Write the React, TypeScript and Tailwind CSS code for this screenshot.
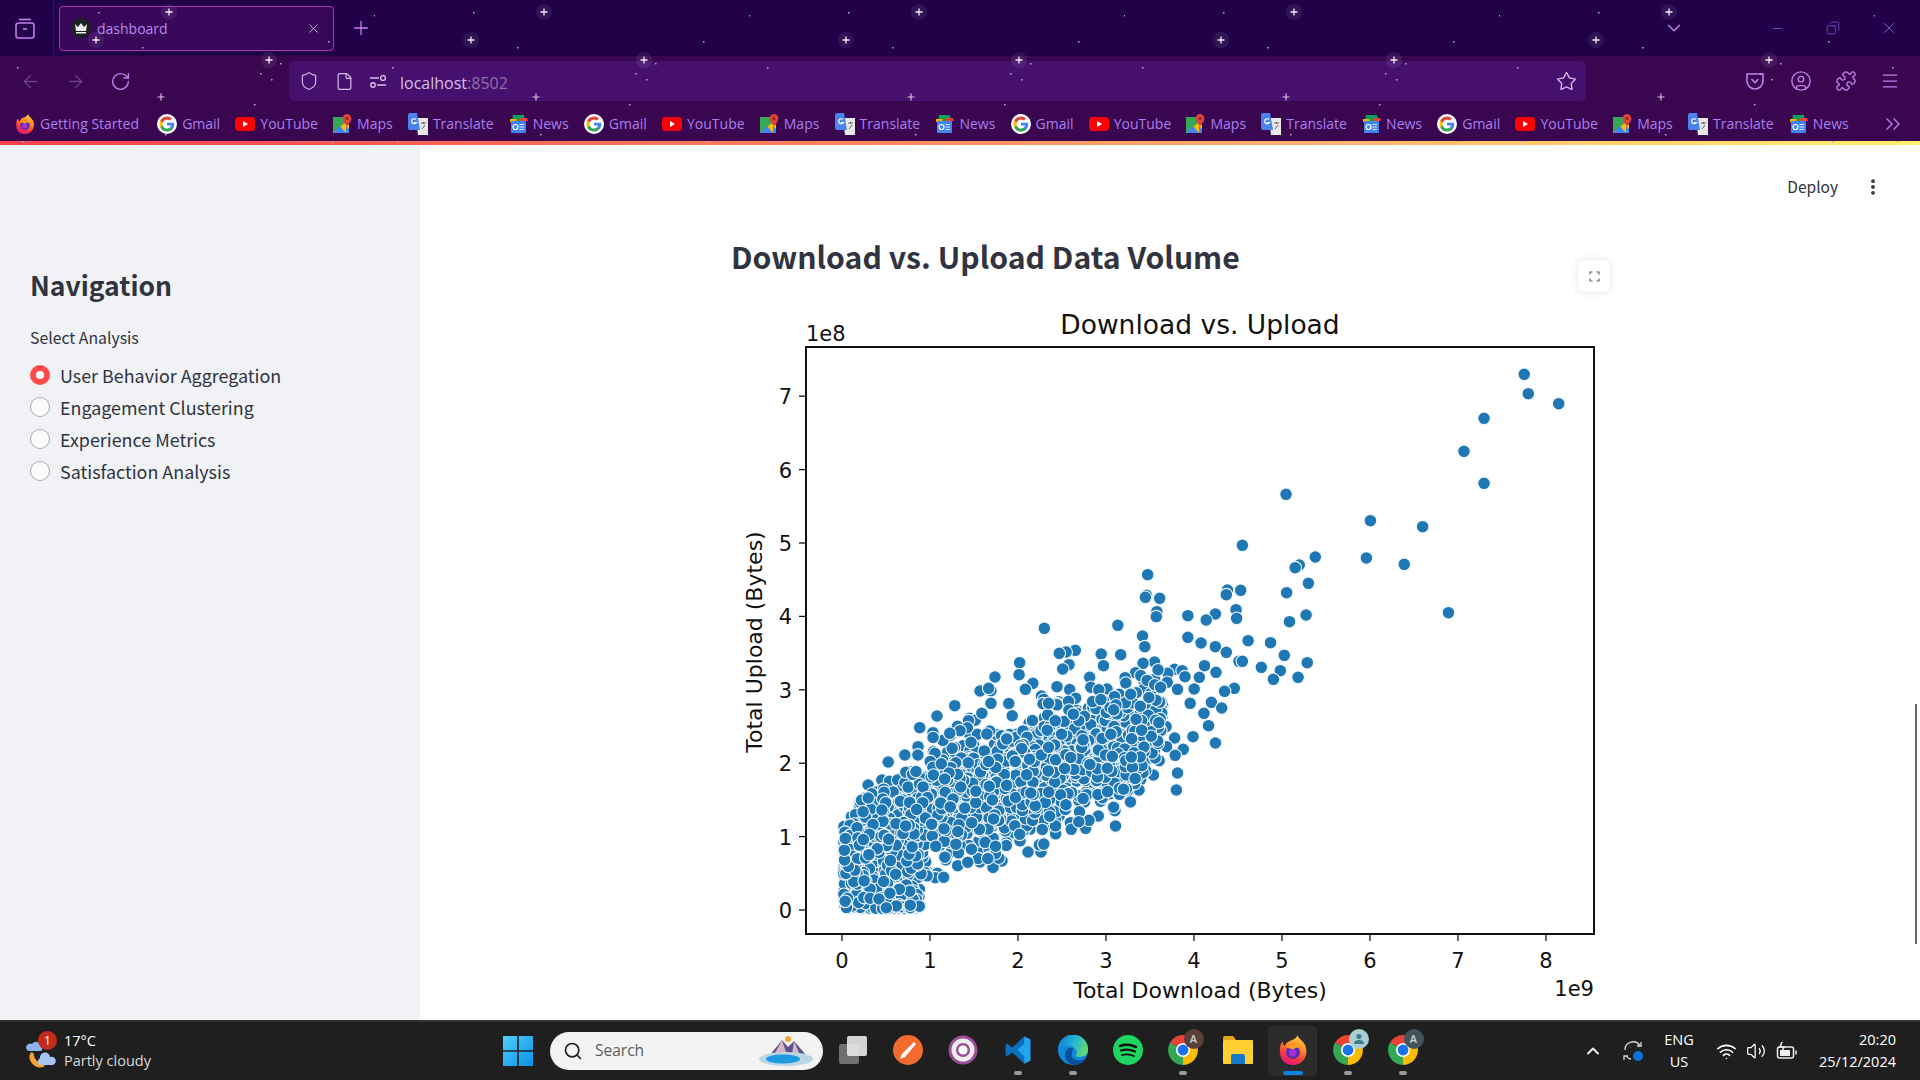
import {
  ArrowLeft, ArrowRight, ChevronDown, ChevronUp, ChevronsRight, CircleUser, Copy, EllipsisVertical, File,
  Menu, Minus, Plus, Puzzle, RotateCw, Search, Shield, Star, Volume2, Wifi, X,
} from 'lucide-react'

// Stars of the browser theme, one tile of the repeating pattern
const bigStars = [[169, 12], [96, 40], [269, 60]]
const smallDots = [[98, 12], [374, 15], [142, 47], [280, 63], [260, 73], [271, 79], [17, 67], [254, 104], [22, 141], [332, 141], [328, 41], [165, 134]]

function Stars() {
  return (
    <svg className="absolute left-0 top-0 pointer-events-none" width="1920" height="145">
      <defs>
        <pattern id="stars" width="375" height="145" patternUnits="userSpaceOnUse">
          {bigStars.map(([x, y]) => (
            <g key={`${x}-${y}`}>
              <circle cx={x} cy={y} r="8" fill="#ffffff" opacity="0.07" />
              <path d={`M${x - 3.5} ${y}H${x + 3.5}M${x} ${y - 3.500}V${y + 3.500}`} stroke="#f4e9f7" strokeWidth="1.3" />
            </g>
          ))}
          <path d="M157.5 97H164.500M161 93.500V100.500" stroke="#d8bfdf" strokeWidth="1.2" />
          {smallDots.map(([x, y]) => (
            <rect key={`${x}-${y}`} x={x} y={y} width="1.5" height="1.5" fill="#bfa5d0" />
          ))}
        </pattern>
      </defs>
      <rect width="1920" height="145" fill="url(#stars)" />
    </svg>
  )
}

function GoogleIcon({ size = 20 }: { size?: number }) {
  return (
    <svg width={size} height={size} viewBox="0 0 32 32" className="shrink-0">
      <circle cx="16" cy="16" r="16" fill="#fff" />
      <g transform="translate(2.8 2.8) scale(1.1)">
        <path fill="#4285F4" d="M22.56 12.25c0-.78-.07-1.53-.2-2.25H12v4.26h5.92c-.26 1.37-1.04 2.53-2.21 3.31v2.77h3.57c2.08-1.92 3.28-4.74 3.28-8.09z" />
        <path fill="#34A853" d="M12 23c2.97 0 5.46-.98 7.28-2.66l-3.57-2.77c-.98.66-2.23 1.06-3.71 1.06-2.86 0-5.29-1.93-6.16-4.53H2.18v2.84C3.99 20.53 7.7 23 12 23z" />
        <path fill="#FBBC05" d="M5.84 14.09c-.22-.66-.35-1.36-.35-2.09s.13-1.43.35-2.09V7.07H2.18C1.43 8.55 1 10.22 1 12s.43 3.45 1.18 4.93l2.85-2.22.81-.62z" />
        <path fill="#EA4335" d="M12 5.38c1.62 0 3.06.56 4.21 1.64l3.15-3.15C17.45 2.09 14.97 1 12 1 7.7 1 3.99 3.47 2.18 7.07l3.66 2.84c.87-2.6 3.3-4.53 6.16-4.53z" />
      </g>
    </svg>
  )
}

function YouTubeIcon() {
  return (
    <svg width="20" height="14" viewBox="0 0 20 14" className="shrink-0">
      <rect width="20" height="14" rx="4" fill="#f00" />
      <path d="M8 4l5 3-5 3z" fill="#fff" />
    </svg>
  )
}

function MapsIcon() {
  return (
    <svg width="19" height="20" viewBox="0 0 19 20" className="shrink-0">
      <path d="M0 3h13v16H0z" fill="#34a853" />
      <path d="M0 19l13-11 3 3v8z" fill="#fbbc04" />
      <path d="M0 19L7 12l6 7z" fill="#4285f4" />
      <path d="M13 19V12l3 3v4z" fill="#4285f4" />
      <path d="M14 0a4.4 4.4 0 0 1 4.4 4.4C18.4 7.6 14 12 14 12S9.6 7.6 9.6 4.4A4.4 4.4 0 0 1 14 0z" fill="#db4437" />
      <circle cx="14" cy="4.4" r="1.5" fill="#8f2a22" />
    </svg>
  )
}

function TranslateIcon() {
  return (
    <svg width="20" height="22" viewBox="0 0 20 22" className="shrink-0">
      <path d="M8 5h12v17H10z" fill="#e8e8e8" />
      <path d="M13 10h5M15.5 9v2M14 16l3-4" stroke="#666" strokeWidth="1" fill="none" />
      <path d="M2 0h7l3 17H2a2 2 0 0 1-2-2V2a2 2 0 0 1 2-2z" fill="#4a82ee" />
      <path d="M8 6.5a2.5 2.5 0 1 0 .4 3H6" stroke="#fff" strokeWidth="1.2" fill="none" />
    </svg>
  )
}

function NewsIcon() {
  return (
    <svg width="19" height="20" viewBox="0 0 19 20" className="shrink-0">
      <path d="M4 1h11l1 6H3z" fill="#0c9d58" />
      <path d="M1 5h7l-1 3H1z" fill="#f9ab00" />
      <path d="M11 4h7l1 3h-8z" fill="#e94235" />
      <rect x="2" y="7" width="15" height="12" rx="1" fill="#4285f4" />
      <path d="M10.5 10.5h4.5M10.5 13h4.5M10.5 15.5h4.5" stroke="#dbe8fc" strokeWidth="1.2" />
      <circle cx="6.5" cy="13" r="2.5" stroke="#fff" strokeWidth="1.2" fill="none" />
    </svg>
  )
}

function FirefoxIcon({ size = 20 }: { size?: number }) {
  return (
    <svg width={size} height={size} viewBox="0 0 32 32" className="shrink-0">
      <defs>
        <linearGradient id="ffbody" x1="0.75" y1="0" x2="0.35" y2="1">
          <stop offset="0" stopColor="#ffd43a" />
          <stop offset="0.4" stopColor="#ff8a2b" />
          <stop offset="0.75" stopColor="#f5343f" />
          <stop offset="1" stopColor="#e31587" />
        </linearGradient>
      </defs>
      <path d="M21 0c0 4 8 7 9 14 2 10-5 18-14 18S1 26 2 15c0-3 1-6 3-8 0 2 1 4 2 5 1-3 3-5 6-6 4-1 7-3 8-6z" fill="url(#ffbody)" />
      <circle cx="16" cy="18" r="7.5" fill="#5b2bb5" />
      <path d="M9 13c3-4 11-4 14 1-3-1-5 0-6 1-3 0-6-1-8-2z" fill="#ff9a1f" />
      <circle cx="15.500" cy="19" r="4" fill="#a52fd6" />
    </svg>
  )
}

function ChromeIcon({ badge, badgeBg, person }: { badge?: string; badgeBg?: string; person?: boolean }) {
  return (
    <div className="relative h-[30px] w-[30px]">
      <svg width="30" height="30" viewBox="0 0 32 32">
        <path d="M16 16L2.2 8A16 16 0 0 1 29.8 8z" fill="#ea4335" />
        <path d="M16 16L29.8 8A16 16 0 0 1 16 32z" fill="#fbbc04" />
        <path d="M16 16L16 32A16 16 0 0 1 2.2 8z" fill="#34a853" />
        <circle cx="16" cy="16" r="7.500" fill="#fff" />
        <circle cx="16" cy="16" r="5.800" fill="#1a73e8" />
      </svg>
      <span className="absolute -right-[6px] -top-[6px] flex h-[20px] w-[20px] items-center justify-center rounded-full text-[11px] font-semibold text-[#cfcfcf]" style={{ backgroundColor: badgeBg }}>
        {person ? (
          <svg width="12" height="12" viewBox="0 0 12 12" fill="#3f7c88"><circle cx="6" cy="3.500" r="2.500" /><path d="M1 11c0-3 2-4 5-4s5 1 5 4z" /></svg>
        ) : badge}
      </span>
    </div>
  )
}

const bookmarkSet = [
  { label: 'Gmail', icon: <GoogleIcon /> },
  { label: 'YouTube', icon: <YouTubeIcon /> },
  { label: 'Maps', icon: <MapsIcon /> },
  { label: 'Translate', icon: <TranslateIcon /> },
  { label: 'News', icon: <NewsIcon /> },
]

const bookmarks = [
  { label: 'Getting Started', icon: <FirefoxIcon /> },
  ...bookmarkSet,
  ...bookmarkSet,
  ...bookmarkSet,
  ...bookmarkSet,
]

function TabBar() {
  return (
    <div className="flex h-14 items-center bg-[#210249] text-[#c77dec]">
      <div className="flex h-full w-[54px] items-center justify-center border-r border-[#3b1560] pr-[4px]">
        <svg width="20" height="21" viewBox="0 0 20 21" fill="none" stroke="currentColor" strokeWidth="1.6">
          <path d="M4 1.5h12" />
          <rect x="1" y="5" width="18" height="15" rx="2.5" />
          <path d="M8 11h4" />
        </svg>
      </div>
      <div className="ml-[5px] flex h-[45px] w-[275px] items-center rounded-[4px] border border-[#a92fb4] bg-[#38075a] pl-[11px] pr-[12px]">
        <div className="flex h-[20px] w-[20px] items-center justify-center rounded-full bg-[#1f1f26]">
          <svg width="14" height="12" viewBox="0 0 14 12"><path d="M1 2l3 3 3-4 3 4 3-3-1 7H2z" fill="#eee" /><rect x="2" y="10" width="10" height="1.5" fill="#eee" /></svg>
        </div>
        <span className="ml-[6px] flex-1 font-['Open_Sans',sans-serif] text-[14px] text-[#b98aee]">dashboard</span>
        <X size={15} strokeWidth={1.4} className="text-[#d7b7ee]" />
      </div>
      <Plus size={22} strokeWidth={1.4} className="ml-[16px]" />
      <ChevronDown size={22} strokeWidth={1.6} className="ml-[1291px]" />
      <Minus size={15} strokeWidth={1.3} className="ml-[85px] text-[#8a54d8]" />
      <Copy size={14} strokeWidth={1.3} className="ml-[41px] scale-x-[-1] text-[#8a54d8]" />
      <X size={18} strokeWidth={1.3} className="ml-[40px] text-[#8a54d8]" />
    </div>
  )
}

function NavBar() {
  return (
    <div className="flex h-[50px] items-center bg-[#39064f] text-[#c77dec]">
      <ArrowLeft size={21} strokeWidth={1.5} className="ml-[20px] text-[#6f3f96]" />
      <ArrowRight size={21} strokeWidth={1.5} className="ml-[24px] text-[#6f3f96]" />
      <RotateCw size={21} strokeWidth={1.6} className="ml-[24px]" />
      <div className="ml-[158px] flex h-10 w-[1297px] items-center rounded-[5px] bg-[#47106f] pl-[10px] pr-[9px] text-[#d9bde9]">
        <Shield size={20} strokeWidth={1.4} />
        <File size={19} strokeWidth={1.5} className="ml-[16px]" />
        <svg width="18" height="14" viewBox="0 0 18 14" fill="none" stroke="currentColor" strokeWidth="1.4" className="ml-[15px]">
          <path d="M1 4h9M8 11h9" />
          <circle cx="14" cy="4" r="2.4" />
          <circle cx="4" cy="11" r="2.2" />
        </svg>
        <span className="ml-[13px] flex-1 pt-[3px] font-['Open_Sans',sans-serif] text-[16px] text-[#d8bfe6]">
          localhost<span className="text-[#8f70a8]">:8502</span>
        </span>
        <Star size={21} strokeWidth={1.5} />
      </div>
      <svg width="20" height="20" viewBox="0 0 20 20" fill="none" stroke="currentColor" strokeWidth="1.6" className="ml-[159px]">
        <path d="M2 3h16v7a8 8 0 0 1-16 0z" />
        <path d="M6.5 8l3.5 3.5L13.5 8" />
      </svg>
      <CircleUser size={22} strokeWidth={1.5} className="ml-[25px]" />
      <Puzzle size={22} strokeWidth={1.5} className="ml-[23px]" />
      <Menu size={20} strokeWidth={1.5} className="ml-[23px]" />
    </div>
  )
}

function BookmarkBar() {
  return (
    <div className="flex h-[35px] items-center overflow-hidden bg-[#39064f] pl-[15px]">
      <div className="flex w-[1866px] items-center gap-[15.2px]">
        {bookmarks.map((b, i) => (
          <div key={i} className={`flex shrink-0 items-center gap-[5px] ${i === 0 ? 'mr-[3px]' : ''}`}>
            {b.icon}
            <span className="font-['Open_Sans',sans-serif] text-[14px] text-[#ab7ff0]">{b.label}</span>
          </div>
        ))}
      </div>
      <ChevronsRight size={24} strokeWidth={1.4} className="shrink-0 text-[#c77dec]" />
    </div>
  )
}

const options = ['User Behavior Aggregation', 'Engagement Clustering', 'Experience Metrics', 'Satisfaction Analysis']

function Sidebar() {
  return (
    <aside className="w-[420px] shrink-0 bg-[#f0f2f6] pl-[30px] pt-[119px] font-['Noto_Sans_CJK_SC',sans-serif] text-[#31333f]">
      <h2 className="text-[26.5px] font-bold leading-[42px]">Navigation</h2>
      <p className="mt-[20px] text-[15.8px] leading-[24px]">Select Analysis</p>
      <div className="mt-[9px] flex flex-col">
        {options.map((o, i) => (
          <div key={o} className="flex h-8 items-center gap-[10px]">
            {i === 0 ? (
              <span className="flex h-5 w-5 items-center justify-center rounded-full bg-[#ff4b4b]">
                <span className="h-2 w-2 rounded-full bg-white" />
              </span>
            ) : (
              <span className="h-5 w-5 rounded-full border border-[#a9a9ad] bg-[#fafafc]" />
            )}
            <span className="text-[17.9px] leading-[26px]">{o}</span>
          </div>
        ))}
      </div>
    </aside>
  )
}

// Scatter chart helpers: page pixels, read off the reference
const px = (v: number) => 842 + 88 * v
const py = (v: number) => 910 - 73.4 * v

const lerp = (pts: number[][], x: number) => {
  for (let i = 1; i < pts.length; i++) {
    if (x <= pts[i][0]) {
      const [x0, y0] = pts[i - 1]
      const [x1, y1] = pts[i]
      return y0 + ((x - x0) / (x1 - x0)) * (y1 - y0)
    }
  }
  return pts[pts.length - 1][1]
}

const upper = [[0, 1.1], [0.1, 1.4], [0.3, 1.8], [0.5, 2.05], [1, 2.45], [1.5, 2.8], [2, 3], [2.5, 3.2], [3, 3.3], [3.5, 3.4], [3.7, 3.3]]
const lower = [[0, 0.02], [0.9, 0.02], [1, 0.28], [1.85, 0.45], [2.2, 0.6], [2.45, 0.8], [2.8, 1.05], [3.1, 1.15], [3.55, 1.75], [3.7, 2]]

function buildCloud() {
  let seed = 20241225
  const rnd = () => {
    seed = (seed * 1664525 + 1013904223) % 4294967296
    return seed / 4294967296
  }
  const out: number[][] = []
  // dense block in the lower left corner
  for (let i = 0; i < 420; i++) {
    out.push([px(0.02 + 0.86 * rnd()), py(0.02 + 1.1 * rnd() * rnd())])
  }
  for (let i = 0; i < 1900; i++) {
    const x = 0.02 + 3.62 * Math.pow(rnd(), 1.35)
    const lo = lerp(lower, x)
    const hi = lerp(upper, x)
    // soft falloff towards both edges, so the outline breaks up
    const t = (rnd() + rnd() + rnd() * 0.5) / 2.5
    out.push([px(x), py(lo + (hi - lo) * t)])
  }
  for (let i = out.length - 1; i > 0; i--) {
    const j = Math.floor(rnd() * (i + 1))
    const tmp = out[i]
    out[i] = out[j]
    out[j] = tmp
  }
  return out
}

// stragglers, traced from the two crops of the chart
const upperPts = [[1401, 463], [1408, 521], [1461, 551], [1331, 595], [1296, 694], [1331, 790], [986, 823], [1133, 902], [1224, 920], [910, 976], [1037, 1011], [1126, 1014], [1192, 1033], [1009, 1035], [1002, 1043], [745, 1064], [1025, 1090], [884, 1110], [907, 1111], [882, 1124], [743, 1126], [741, 1132], [766, 1135], [987, 1118], [761, 1175], [899, 1169], [815, 1187], [863, 1182], [1021, 1185], [760, 1190], [847, 1200], [1269, 1178], [992, 1205], [900, 1195]]
const lowerPts = [[565, 25], [693, 16], [736, 48], [815, 52], [838, 69], [920, 62], [959, 68], [863, 80], [740, 80], [882, 97], [983, 106], [1023, 128], [904, 124], [910, 124], [757, 126], [698, 104], [664, 102], [619, 91], [603, 96], [591, 100], [737, 130], [608, 134], [597, 147], [668, 137], [522, 128], [943, 142], [976, 152], [844, 137], [864, 157], [724, 158], [521, 164], [479, 171], [964, 178], [1007, 172], [835, 172], [792, 148], [805, 152], [780, 160], [810, 170], [545, 190], [779, 187], [739, 186], [757, 178], [453, 213], [472, 212], [896, 205], [879, 214], [797, 208], [826, 207], [532, 208], [560, 230], [856, 247], [819, 250], [874, 264], [771, 256], [409, 257], [378, 288], [843, 280], [770, 290], [851, 317], [348, 323], [777, 320], [863, 369], [824, 350], [792, 354], [807, 388], [778, 380], [793, 406], [765, 422], [797, 459], [755, 465], [733, 478], [795, 510], [730, 510], [710, 512], [715, 546], [688, 572], [659, 588], [689, 618], [637, 625], [293, 426], [243, 555], [258, 495], [229, 590], [282, 480], [322, 405], [345, 380], [371, 338], [402, 345], [435, 295], [468, 205], [472, 250], [560, 228], [587, 200], [645, 170]]

const points = [
  ...upperPts.map(([x, y]) => [720 + x / 1.742, 220 + y / 3]),
  ...lowerPts.map(([x, y]) => [720 + x / 1.742, 620 + y / 3]),
  ...buildCloud(),
]

function Chart() {
  const xTicks = [0, 1, 2, 3, 4, 5, 6, 7, 8]
  const yTicks = [0, 1, 2, 3, 4, 5, 6, 7]
  return (
    <svg width="870" height="735" viewBox="740 285 870 735" className="font-['DejaVu_Sans',sans-serif]">
      <text x="1200" y="334" textAnchor="middle" fontSize="26.5" fill="#111">Download vs. Upload</text>
      <text x="806" y="341" fontSize="21" fill="#111">1e8</text>
      <text x="1594" y="996" textAnchor="end" fontSize="21" fill="#111">1e9</text>
      <text x="1200" y="998" textAnchor="middle" fontSize="22" fill="#111">Total Download (Bytes)</text>
      <text transform="translate(762 642) rotate(-90)" textAnchor="middle" fontSize="22" fill="#111">Total Upload (Bytes)</text>
      {points.map(([x, y], i) => (
        <circle key={i} cx={x} cy={y} r="6.3" fill="#1f77b4" stroke="#f2f8fc" strokeWidth="1.1" />
      ))}
      <rect x="806" y="347" width="788" height="587" fill="none" stroke="#111" strokeWidth="2" />
      {xTicks.map((t) => (
        <g key={t}>
          <path d={`M${px(t)} 934V941`} stroke="#111" strokeWidth="1.3" />
          <text x={px(t)} y="968" textAnchor="middle" fontSize="21" fill="#111">{t}</text>
        </g>
      ))}
      {yTicks.map((t) => (
        <g key={t}>
          <path d={`M799 ${py(t)}H806`} stroke="#111" strokeWidth="1.3" />
          <text x="792" y={py(t) + 8} textAnchor="end" fontSize="21" fill="#111">{t}</text>
        </g>
      ))}
    </svg>
  )
}

function MainPanel() {
  return (
    <main className="relative flex-1 overflow-hidden bg-white font-['Noto_Sans_CJK_SC',sans-serif] text-[#31333f]">
      <div className="flex h-[84px] items-center justify-end pr-[37px]">
        <span className="text-[15.5px]">Deploy</span>
        <EllipsisVertical size={20} strokeWidth={2.6} className="ml-[25px]" />
      </div>
      <div className="relative ml-[311px] w-[880px]">
        <h1 className="text-[30.2px] font-bold leading-[54px]">Download vs. Upload Data Volume</h1>
        <div className="mt-[2px] ml-[9px]">
          <Chart />
        </div>
        <button className="absolute left-[847px] top-[31px] flex h-8 w-8 items-center justify-center rounded-[6px] bg-white shadow-[0_0_8px_rgba(0,0,0,0.12)]">
          <svg width="11" height="11" viewBox="0 0 11 11" fill="none" stroke="#666" strokeWidth="1.2">
            <path d="M1 3.5V1h2.5M7.5 1H10v2.5M10 7.5V10H7.5M3.5 10H1V7.5" />
          </svg>
        </button>
      </div>
      <div className="absolute right-[3px] top-[559px] h-[240px] w-[2px] bg-[#6a6a6a]" />
    </main>
  )
}

function TaskSlot({ children, dot, active }: { children: React.ReactNode; dot?: boolean; active?: boolean }) {
  return (
    <div className="relative flex h-[50px] w-[55px] items-center justify-center">
      {active && <div className="absolute inset-y-0 left-[3px] right-[3px] rounded-[4px] border border-[#2e2e2e] bg-[#2b2b2b]" />}
      <div className="relative -mt-[2px]">{children}</div>
      {dot && <span className="absolute bottom-[1px] left-[24px] h-[4px] w-[8px] rounded-full bg-[#9a9a9a]" />}
      {active && <span className="absolute bottom-[1px] left-[18px] h-[4px] w-[20px] rounded-full bg-[#0a84e0]" />}
    </div>
  )
}

function Taskbar() {
  return (
    <footer className="flex h-[60px] items-center border-t-[2px] border-[#333] bg-[#1f1f1f] font-['Open_Sans',sans-serif] text-white">
      <div className="flex w-[503px] shrink-0 items-center pl-[24px]">
        <div className="relative h-[40px] w-[40px]">
          <svg width="34" height="40" viewBox="0 0 34 40">
            <path d="M3 19a4 4 0 0 1 5-6 5 5 0 0 1 9 2 3 3 0 0 1 0 5H5a3 3 0 0 1-2-1z" fill="#8fb3ee" />
            <path d="M8 22a9 9 0 0 0 12 12 12 12 0 0 1-12-12z" fill="#f3a233" stroke="#f3a233" strokeWidth="3" />
            <path d="M16 34a4 4 0 0 1 0-7 5 5 0 0 1 10-1 4 4 0 0 1 3 8z" fill="#a8c5f3" />
          </svg>
          <span className="absolute left-[14px] top-0 flex h-[19px] w-[19px] items-center justify-center rounded-full bg-[#c42b1c] text-[12px]">1</span>
        </div>
        <div className="flex flex-col">
          <span className="text-[14.5px] leading-[20px]">17°C</span>
          <span className="text-[14.5px] leading-[20px] text-[#d8d8d8]">Partly cloudy</span>
        </div>
      </div>
      <svg width="30" height="30" viewBox="0 0 30 30" className="shrink-0">
        <defs>
          <linearGradient id="win" x1="0" y1="0" x2="1" y2="1">
            <stop offset="0" stopColor="#4fd0f8" />
            <stop offset="1" stopColor="#0a8fe8" />
          </linearGradient>
        </defs>
        <path d="M0 0h14.2v14.2H0zM15.8 0H30v14.2H15.8zM0 15.8h14.2V30H0zM15.8 15.8H30V30H15.8z" fill="url(#win)" />
      </svg>
      <div className="ml-[17px] flex h-[38px] w-[273px] shrink-0 items-center rounded-full bg-[#f3f3f3] pl-[13px] pr-[7px]">
        <Search size={20} strokeWidth={2} className="text-[#222]" />
        <span className="ml-[12px] flex-1 text-[15.5px] text-[#5c5c5c]">Search</span>
        <svg width="58" height="32" viewBox="0 0 58 32">
          <path d="M12 20L24 5l6 7 6-6 12 14z" fill="#5b5290" />
          <path d="M24 5l5 15H16zM36 6l6 14h-8z" fill="#d6b7c9" />
          <circle cx="30" cy="4" r="3" fill="#f5a623" />
          <ellipse cx="28" cy="24" rx="27" ry="7" fill="#bcd6e6" />
          <ellipse cx="25" cy="24" rx="17" ry="4.5" fill="#1e9be0" />
        </svg>
      </div>
      <div className="ml-[2px] flex shrink-0 items-center">
        <TaskSlot>
          <div className="relative h-[28px] w-[28px]">
            <div className="absolute bottom-0 left-0 h-[20px] w-[20px] rounded-[2px] bg-[#707070]" />
            <div className="absolute right-0 top-0 h-[20px] w-[20px] rounded-[2px] bg-[#e8e8e8]/90" />
          </div>
        </TaskSlot>
        <TaskSlot>
          <svg width="30" height="30" viewBox="0 0 30 30">
            <circle cx="15" cy="15" r="15" fill="#f26a2e" />
            <path d="M21 7l2 2-11 13-5 2 2-5z" fill="#fff" />
          </svg>
        </TaskSlot>
        <TaskSlot>
          <svg width="30" height="30" viewBox="0 0 30 30">
            <circle cx="15" cy="15" r="14.5" fill="#9a4f96" />
            <circle cx="15" cy="15" r="11.5" fill="#eee" />
            <circle cx="15" cy="15" r="7" fill="#9a4f96" />
            <circle cx="15" cy="15" r="4.6" fill="#fff" />
          </svg>
        </TaskSlot>
        <TaskSlot dot>
          <svg width="30" height="30" viewBox="0 0 24 24">
            <path d="M17 1l-9.500 9-4-3L2 8v8l1.500 1 4-3 9.500 9 1-6-5.500-5L18 7z" fill="#0a72bd" />
            <path d="M17 1l5 2.500v17L17 23z M17 7l-5.500 5 5.500 5z" fillRule="evenodd" fill="#22a5f1" />
          </svg>
        </TaskSlot>
        <TaskSlot dot>
          <svg width="30" height="30" viewBox="0 0 30 30">
            <defs>
              <linearGradient id="edge" x1="0" y1="0.3" x2="1" y2="0.6">
                <stop offset="0" stopColor="#0f7fd0" />
                <stop offset="0.5" stopColor="#25b4d8" />
                <stop offset="1" stopColor="#66dc6e" />
              </linearGradient>
            </defs>
            <circle cx="15" cy="15" r="15" fill="#1189d8" />
            <path d="M0 14A15 15 0 0 1 30 15c0 5-5 7-9 7-2 0-4-1-3-2 1-2 1-3 0-5-2-4-6-5-10-4-3 1-6 2-8 3z" fill="url(#edge)" />
            <path d="M15 13c-5-1-8 3-8 7 0 5 4 9 9 10 5 0 10-2 12-7-3 2-6 3-9 2-4-1-6-4-5-7 0-2 1-4 1-5z" fill="#0c4f9c" />
          </svg>
        </TaskSlot>
        <TaskSlot>
          <svg width="30" height="30" viewBox="0 0 30 30" fill="none" stroke="#111" strokeLinecap="round">
            <circle cx="15" cy="15" r="15" fill="#1ed760" stroke="none" />
            <path d="M7 11c6-2 11-1.500 16 1" strokeWidth="2.6" />
            <path d="M8 15.500c5-1.500 10-1 14 1" strokeWidth="2.2" />
            <path d="M9 20c4-1 8-1 12 1" strokeWidth="1.9" />
          </svg>
        </TaskSlot>
        <TaskSlot dot><ChromeIcon badge="A" badgeBg="#5a4038" /></TaskSlot>
        <TaskSlot>
          <svg width="32" height="28" viewBox="0 0 32 28">
            <path d="M1 2a2 2 0 0 1 2-2h8l3 4H1z" fill="#e6a417" />
            <rect x="1" y="4" width="30" height="24" rx="1" fill="#ffcf33" />
            <path d="M9 20a2 2 0 0 1 2-2h10a2 2 0 0 1 2 2v8H9z" fill="#1479c9" />
          </svg>
        </TaskSlot>
        <TaskSlot active><FirefoxIcon size={30} /></TaskSlot>
        <TaskSlot dot><ChromeIcon badgeBg="#a8d0d4" person /></TaskSlot>
        <TaskSlot dot><ChromeIcon badge="A" badgeBg="#44545e" /></TaskSlot>
      </div>
      <ChevronUp size={20} strokeWidth={2.4} className="ml-[153px] shrink-0 text-[#eee]" />
      <svg width="22" height="24" viewBox="0 0 22 24" fill="none" stroke="#ddd" strokeWidth="1.3" className="ml-[19px] shrink-0">
        <path d="M3 11a8 8 0 0 1 15-4M19 3v4h-4M4 17a7 7 0 0 0 5 3M2 21v-4h4" />
        <circle cx="16" cy="17" r="5" fill="#0a74da" stroke="none" />
      </svg>
      <div className="ml-[15px] flex w-[40px] shrink-0 flex-col items-center text-[14.5px] leading-[22px]">
        <span>ENG</span>
        <span>US</span>
      </div>
      <Wifi size={21} strokeWidth={1.8} className="ml-[17px] shrink-0" />
      <Volume2 size={20} strokeWidth={1.5} className="ml-[9px] shrink-0" />
      <svg width="22" height="20" viewBox="0 0 22 20" fill="none" stroke="#eee" strokeWidth="1.5" className="ml-[10px] shrink-0">
        <rect x="1.500" y="6" width="16" height="11" rx="2" />
        <path d="M20 9.500v4" />
        <path d="M6 1L4 6h4L6 11" />
        <rect x="4" y="9" width="10" height="6" fill="#eee" stroke="none" />
      </svg>
      <div className="ml-auto flex flex-col items-end pr-[24px] text-[14.5px] leading-[22px]">
        <span>20:20</span>
        <span>25/12/2024</span>
      </div>
    </footer>
  )
}

export default function App() {
  return (
    <div className="relative flex h-[1080px] w-[1920px] flex-col overflow-hidden">
      <TabBar />
      <NavBar />
      <BookmarkBar />
      <div className="h-[4px] bg-[linear-gradient(to_right,#f6414f,#ff7b5c_40%,#ffb56b_70%,#fff06d)]" />
      <div className="flex min-h-0 flex-1">
        <Sidebar />
        <MainPanel />
      </div>
      <Taskbar />
      <Stars />
    </div>
  )
}
